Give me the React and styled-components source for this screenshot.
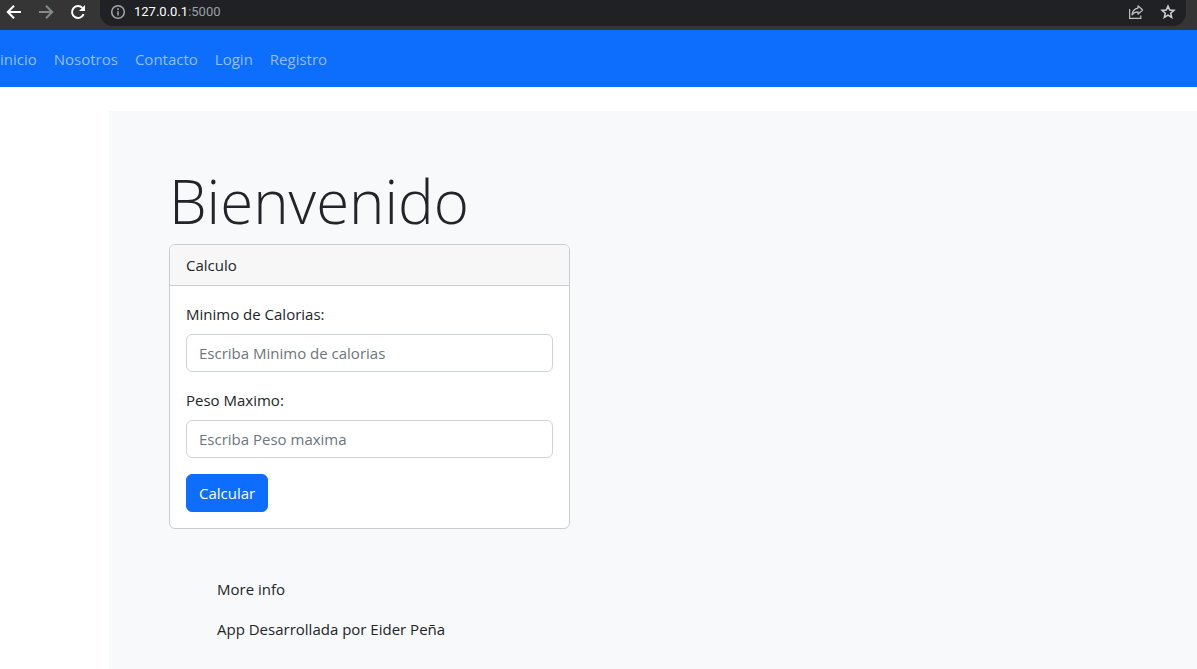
import React from "react";
import styled, { createGlobalStyle } from "styled-components";

const GlobalStyle = createGlobalStyle`
  *, *::before, *::after { box-sizing: border-box; }
  html, body, #root { height: 100%; }
  body {
    margin: 0;
    background: #fff;
    color: #212529;
    font-family: "Segoe UI", "Open Sans", "Noto Sans", sans-serif;
    font-size: 15px;
    line-height: 24px;
  }
`;

const Page = styled.div`
  display: flex;
  flex-direction: column;
  min-height: 100%;
`;

const BrowserBar = styled.header`
  display: flex;
  align-items: flex-start;
  height: 30px;
  padding: 0 11px 0 4px;
  background: #353535;
`;

const BrowserButton = styled.button`
  display: flex;
  align-items: center;
  justify-content: center;
  width: ${(p) => (p.$small ? 20 : 32)}px;
  height: 24px;
  padding: 0;
  border: 0;
  background: none;
  color: ${(p) => p.$color || "#fff"};
`;

const BrowserNav = styled.div`
  display: flex;
  width: 96px;
  margin-left: -6px;
`;

const AddressBar = styled.div`
  display: flex;
  flex: 1;
  align-items: center;
  gap: 6px;
  height: 26px;
  padding: 0 8px 2px;
  border-radius: 0 0 13px 13px;
  background: #202124;
  margin-left: 6px;
`;

const Address = styled.span`
  flex: 1;
  color: #9aa0a6;
  font-family: Roboto, "Open Sans", sans-serif;
  font-size: 13px;
  line-height: 24px;
`;

const Host = styled.span`
  color: #fff;
`;

const AddressActions = styled.div`
  display: flex;
  gap: 12px;
`;

const Navbar = styled.nav`
  display: flex;
  align-items: center;
  gap: 17px;
  height: 57px;
  background: #0d6efd;
`;

const NavLink = styled.a`
  padding: 8px 0;
  color: #92befe;
  text-decoration: none;
`;

const Hero = styled.main`
  flex: 1;
  margin: 24px 0 0 109px;
  padding: 52px 60px 0;
  background: #f8f9fa;
`;

const Title = styled.h1`
  margin: 0 0 4px;
  font-size: 60px;
  font-weight: 300;
  line-height: 77px;
`;

const Card = styled.section`
  max-width: 401px;
  border: 1px solid #cbcccd;
  border-radius: 6px;
  background: #fff;
  overflow: hidden;
`;

const CardHeader = styled.div`
  padding: 8px 16px;
  border-bottom: 1px solid #cbcccd;
  background: #f7f7f7;
`;

const Form = styled.form`
  display: flex;
  flex-direction: column;
  align-items: flex-start;
  gap: 16px;
  padding: 16px;
`;

const Field = styled.div`
  display: flex;
  flex-direction: column;
  gap: 8px;
  width: 100%;
`;

const Input = styled.input`
  width: 100%;
  height: 38px;
  padding: 6px 12px;
  border: 1px solid #ced4da;
  border-radius: 6px;
  background: #fff;
  color: #212529;
  font: inherit;
  &::placeholder { color: #6c757d; opacity: 1; }
`;

const SubmitButton = styled.button`
  height: 38px;
  padding: 6px 12px;
  border: 1px solid #0d6efd;
  border-radius: 6px;
  background: #0d6efd;
  color: #fff;
  font: inherit;
`;

const Info = styled.footer`
  display: flex;
  flex-direction: column;
  gap: 16px;
  padding: 48px 48px 24px;
`;

const InfoText = styled.p`
  margin: 0;
`;

const Icon = ({ children, size = 16, stroke = 2 }) => (
  <svg width={size} height={size} viewBox="0 0 16 16" fill="none" stroke="currentColor" strokeWidth={stroke} aria-hidden="true">
    {children}
  </svg>
);

const links = ["inicio", "Nosotros", "Contacto", "Login", "Registro"];

const fields = [
  { id: "calorias", label: "Minimo de Calorias:", placeholder: "Escriba Minimo de calorias" },
  { id: "peso", label: "Peso Maximo:", placeholder: "Escriba Peso maxima" },
];

export default function App() {
  return (
    <Page>
      <GlobalStyle />
      <BrowserBar>
        <BrowserNav>
          <BrowserButton aria-label="Back">
            <Icon><path d="M15 8H2.5M8 1.8 1.8 8 8 14.2" /></Icon>
          </BrowserButton>
          <BrowserButton aria-label="Forward" $color="#87898b">
            <Icon><path d="M1 8h12.5M8 1.8 14.2 8 8 14.2" /></Icon>
          </BrowserButton>
          <BrowserButton aria-label="Reload">
            <Icon>
              <path d="M13.6 10.2A6 6 0 1 1 12.4 3.9" />
              <path d="M15 1v6H9z" fill="currentColor" stroke="none" />
            </Icon>
          </BrowserButton>
        </BrowserNav>
        <AddressBar>
          <BrowserButton aria-label="Site information" $small $color="#a5a8ac">
            <Icon stroke={1.5}>
              <circle cx="8" cy="8" r="6.3" />
              <path d="M8 7.2v4.3M8 4.3v1.6" />
            </Icon>
          </BrowserButton>
          <Address><Host>127.0.0.1</Host>:5000</Address>
          <AddressActions>
            <BrowserButton aria-label="Share" $small $color="#bdc1c6">
              <Icon stroke={1.2}>
                <path d="M1.6 5v9.4h11.2v-3" />
                <path d="M10 1.8 14.6 6 10 10.2V7.8C7.4 7.8 5.5 8.6 4 10.8 4.4 7.4 6.4 4.6 10 4.1z" strokeLinejoin="round" />
              </Icon>
            </BrowserButton>
            <BrowserButton aria-label="Bookmark" $small $color="#d0d3d6">
              <Icon stroke={1.5}>
                <path d="m8 2.1 1.7 3.9 4.3.4-3.3 2.8 1 4.2L8 11.1l-3.7 2.3 1-4.2L2 6.4 6.3 6z" />
              </Icon>
            </BrowserButton>
          </AddressActions>
        </AddressBar>
      </BrowserBar>
      <Navbar>
        {links.map((text) => (
          <NavLink key={text} href="#">{text}</NavLink>
        ))}
      </Navbar>
      <Hero>
        <Title>Bienvenido</Title>
        <Card>
          <CardHeader>Calculo</CardHeader>
          <Form onSubmit={(e) => e.preventDefault()}>
            {fields.map((f) => (
              <Field key={f.id}>
                <label htmlFor={f.id}>{f.label}</label>
                <Input id={f.id} type="text" placeholder={f.placeholder} />
              </Field>
            ))}
            <SubmitButton type="submit">Calcular</SubmitButton>
          </Form>
        </Card>
        <Info>
          <InfoText>More info</InfoText>
          <InfoText>App Desarrollada por Eider Peña</InfoText>
        </Info>
      </Hero>
    </Page>
  );
}
